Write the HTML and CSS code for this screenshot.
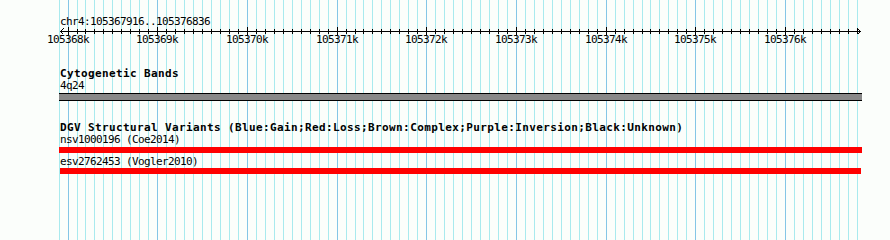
FILE: index.html
```html
<!DOCTYPE html>
<html lang="en">
<head>
  <meta charset="UTF-8" />
  <meta name="viewport" content="width=device-width, initial-scale=1.0" />
  <title>chr4:105367916..105376836</title>
  <link rel="stylesheet" href="styles.css">
</head>
<body>
  <div class="browser">
    <svg class="grid" id="grid" width="890" height="240"></svg>

    <div class="ruler">
      <div class="ruler-title">chr4:105367916..105376836</div>
      <svg class="scale" id="scale" width="890" height="20"></svg>
      <div class="tick-labels" id="tickLabels"></div>
    </div>

    <div class="track">
      <div class="track-name">Cytogenetic Bands</div>
      <div class="feature-label">4q24</div>
      <div class="band"></div>
    </div>

    <div class="track">
      <div class="track-name">DGV Structural Variants (Blue:Gain;Red:Loss;Brown:Complex;Purple:Inversion;Black:Unknown)</div>
      <div class="feature-label">nsv1000196 (Coe2014)</div>
      <div class="variant loss"></div>
      <div class="feature-label">esv2762453 (Vogler2010)</div>
      <div class="variant loss short"></div>
    </div>
  </div>

  <script>
    const start = 105367916;
    const end = 105376836;
    const left = 60;
    const width = 800;
    const ns = "http://www.w3.org/2000/svg";

    const xOf = (pos) => Math.round(left + (pos - start) * width / (end - start)) + 0.5;

    const line = (svg, x1, y1, x2, y2, cls) => {
      const l = document.createElementNS(ns, "line");
      l.setAttribute("x1", x1);
      l.setAttribute("y1", y1);
      l.setAttribute("x2", x2);
      l.setAttribute("y2", y2);
      l.setAttribute("class", cls);
      svg.appendChild(l);
    };

    // grid lines every 100bp, darker every 1kb
    const grid = document.getElementById("grid");
    for (let p = Math.floor(start / 100) * 100; p <= end; p += 100) {
      const x = xOf(p);
      line(grid, x, 0, x, 240, p % 1000 === 0 ? "major" : "minor");
    }

    // ruler with arrows at both ends
    const scale = document.getElementById("scale");
    const tickLabels = document.getElementById("tickLabels");
    line(scale, 60, 4.5, 861, 4.5, "axis");
    line(scale, 60.5, 4.5, 63.5, 1.5, "axis");
    line(scale, 60.5, 4.5, 63.5, 7.5, "axis");
    line(scale, 860.5, 4.5, 857.5, 1.5, "axis");
    line(scale, 860.5, 4.5, 857.5, 7.5, "axis");

    for (let p = Math.ceil(start / 100) * 100; p <= end; p += 100) {
      const x = xOf(p);
      if (p % 1000 === 0) {
        line(scale, x, 0, x, 8, "axis");
        const label = document.createElement("span");
        label.className = "tick-label";
        label.style.left = Math.floor(x) + "px";
        label.textContent = (p / 1000) + "k";
        tickLabels.appendChild(label);
      } else {
        line(scale, x, 2, x, 7, "axis");
      }
    }
  </script>
</body>
</html>
```

FILE: styles.css
```css
body {
  margin: 0;
  padding: 0;
  background-color: #fbfefb;
}

.browser {
  position: relative;
  width: 890px;
  height: 240px;
  overflow: hidden;
  font-family: "DejaVu Sans Mono", "Liberation Mono", monospace;
  font-size: 11px;
  letter-spacing: -0.62px;
  color: #000;
}

.grid {
  position: absolute;
  top: 0;
  left: 0;
  shape-rendering: crispEdges;
}

.grid .minor {
  stroke: #a8eaee;
  stroke-width: 1;
}

.grid .major {
  stroke: #84c6e6;
  stroke-width: 1;
}

.ruler {
  position: relative;
  padding-top: 16px;
}

.ruler-title {
  padding-left: 60px;
  line-height: 11px;
  white-space: nowrap;
}

.scale {
  display: block;
}

.scale .axis {
  stroke: #000;
  stroke-width: 1;
  shape-rendering: crispEdges;
}

.tick-labels {
  position: absolute;
  top: 34px;
  left: 0;
  width: 890px;
  height: 11px;
}

.tick-label {
  position: absolute;
  top: 0;
  line-height: 11px;
  white-space: nowrap;
  transform: translateX(-50%);
}

.track {
  position: relative;
  margin-top: 21px;
}

.track-name {
  padding-left: 60px;
  line-height: 11px;
  font-weight: bold;
  letter-spacing: 0.38px;
  white-space: nowrap;
}

.feature-label {
  padding-left: 60px;
  line-height: 11px;
  margin-top: 3px;
  white-space: nowrap;
}

.track-name + .feature-label {
  margin-top: 1px;
}

.band {
  margin-top: 2px;
  margin-left: 59px;
  width: 803px;
  height: 6px;
  border-top: 1px solid #000;
  border-bottom: 1px solid #000;
  background-color: #888;
}

.variant {
  margin-left: 59px;
  width: 803px;
  height: 6px;
  margin-top: 2px;
}

.variant.short {
  margin-top: 1px;
  margin-left: 60px;
  width: 801px;
}

.loss {
  background-color: #ff0000;
}
```
